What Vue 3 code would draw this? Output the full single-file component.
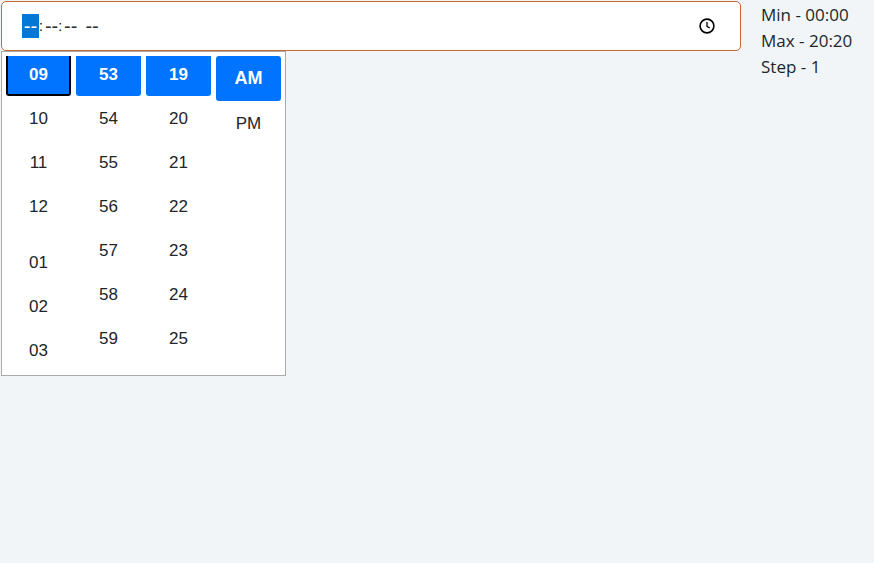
<script setup>
// Time picker with its dropdown open, plus the min / max / step notes.
const columns = [
  { name: "hours", items: ["09", "10", "11", "12", "01", "02", "03"], gapBefore: "01" },
  { name: "minutes", items: ["53", "54", "55", "56", "57", "58", "59"] },
  { name: "seconds", items: ["19", "20", "21", "22", "23", "24", "25"] },
];
const periods = ["AM", "PM"];
const notes = ["Min - 00:00", "Max - 20:20", "Step - 1"];
</script>

<template>
  <div class="page">
    <div class="picker">
      <div class="time-input">
        <span class="time-text"><span class="seg-active">--</span><span class="colon">:</span>--<span class="colon">:</span>--<span class="period">--</span></span>
        <svg class="clock" width="16" height="16" viewBox="0 0 16 16" fill="none" stroke="#000" aria-hidden="true">
          <circle cx="8" cy="8" r="6.9" stroke-width="1.6" />
          <path d="M8 4v4.3l2.8 1.7" stroke-width="1.3" />
        </svg>
      </div>

      <div class="dropdown">
        <div v-for="(col, c) in columns" :key="col.name" class="column">
          <div
            v-for="(item, i) in col.items"
            :key="item"
            class="cell"
            :class="{ selected: i === 0, focused: i === 0 && c === 0, spaced: item === col.gapBefore }"
          >
            {{ item }}
          </div>
        </div>
        <div class="column period-column">
          <div
            v-for="(p, i) in periods"
            :key="p"
            class="cell period-cell"
            :class="{ selected: i === 0 }"
          >
            {{ p }}
          </div>
        </div>
      </div>
    </div>

    <div class="notes">
      <div v-for="n in notes" :key="n">{{ n }}</div>
    </div>
  </div>
</template>

<style>
html,
body {
  background: #f2f5f8;
}
</style>

<style scoped>
.page {
  display: flex;
  gap: 20px;
  min-height: 563px;
  box-sizing: border-box;
  padding: 1px 0 0 1px;
  background: #f2f5f8;
  color: #212529;
}

.picker {
  position: relative;
  width: 740px;
  flex: none;
}

.time-input {
  box-sizing: border-box;
  height: 50px;
  display: flex;
  align-items: center;
  justify-content: space-between;
  padding: 0 25px 0 20px;
  background: #fff;
  border: 1px solid #c8692f;
  border-radius: 5px;
}

.time-text {
  display: flex;
  align-items: center;
  height: 24px;
  font-family: "Liberation Sans", Arial, sans-serif;
  font-size: 20px;
  font-weight: 300;
  color: #333;
}

.seg-active {
  display: flex;
  align-items: center;
  justify-content: center;
  width: 17px;
  height: 24px;
  background: #0078d7;
  color: #fff;
}

.colon {
  font-size: 14px;
  color: #000;
  margin: 0 2px 0 0;
}

.period {
  margin-left: 8px;
}

.clock {
  flex: none;
}

.dropdown {
  position: absolute;
  top: 50px;
  left: 0;
  box-sizing: border-box;
  width: 285px;
  height: 325px;
  display: flex;
  gap: 5px;
  padding: 4px;
  background: #fff;
  border: 1px solid #aaa;
  font-family: "Liberation Sans", Arial, sans-serif;
  font-size: 17px;
  color: #212529;
}

.column {
  flex: 0 0 65px;
  overflow: hidden;
}

.cell {
  box-sizing: border-box;
  height: 44px;
  display: flex;
  align-items: center;
  justify-content: center;
  padding-top: 1px;
}

.cell:first-child {
  margin-top: -4px;
}

.cell.spaced {
  margin-top: 12px;
}

.selected {
  background: #0073ff;
  color: #fff;
  font-weight: 700;
  border-radius: 3px;
}

.focused {
  padding-top: 3px;
  border: solid #000;
  border-width: 0 2px 2px;
}

.period-cell {
  height: 45px;
}

.period-cell:first-child {
  margin-top: 0;
  padding-top: 0;
  font-size: 18px;
}

.notes {
  font-family: "Open Sans", sans-serif;
  font-size: 17px;
  line-height: 26px;
  margin-top: 1px;
}
</style>
